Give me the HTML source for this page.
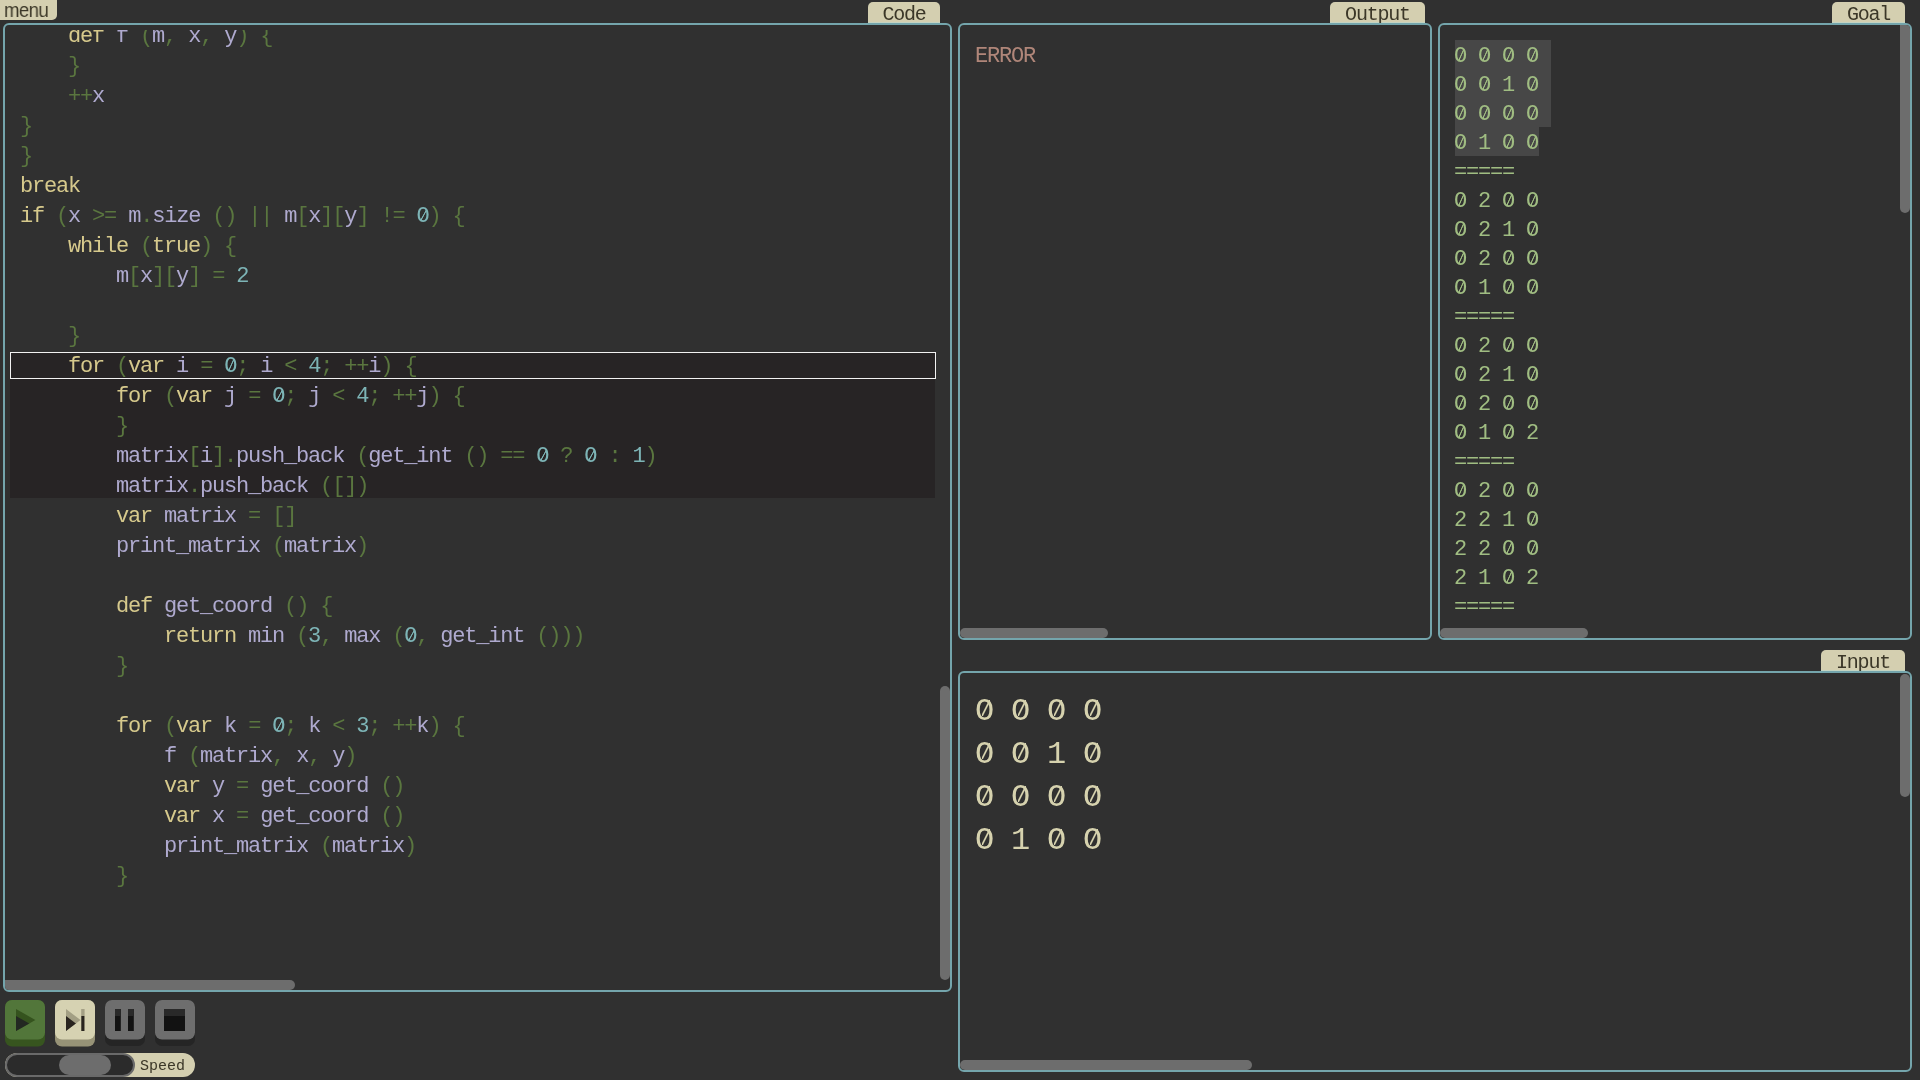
<!DOCTYPE html>
<html><head><meta charset="utf-8">
<style>
html,body{margin:0;padding:0;width:1920px;height:1080px;overflow:hidden;background:#303030;}
pre,.tab,.mono{will-change:transform;}
*{box-sizing:border-box;}
.abs{position:absolute;}
.mono{font-family:"Liberation Mono",monospace;}
.panel{position:absolute;border:2px solid #74a5ac;border-radius:6px;overflow:hidden;background:#303030;}
.tab{position:absolute;box-shadow:inset 0 -1px 0 #c4d4c2;background:#d4cfb0;color:#3b3728;border-radius:5px 5px 0 0;font-family:"Liberation Mono",monospace;font-size:20px;letter-spacing:-1.2px;line-height:25px;text-align:center;}
pre{margin:0;font-family:"Liberation Mono",monospace;}
#code{position:absolute;left:14.5px;top:-8px;font-size:22px;letter-spacing:-1.2px;line-height:30px;white-space:pre;}
b{font-weight:normal;}
.k{color:#d6c98c;}
.v{color:#afaacf;}
.p{color:#5a763f;}
.n{color:#7db4b6;}
i.z{font-style:normal;position:relative;}
i.z::after{content:"";position:absolute;left:0.22em;top:0.21em;width:0.25em;height:0.52em;background:linear-gradient(to bottom right,transparent calc(50% - 0.042em),currentColor calc(50% - 0.012em),currentColor calc(50% + 0.012em),transparent calc(50% + 0.042em));}
.sb{position:absolute;background:#6d6d6d;border-radius:5px;}
#goal{position:absolute;left:14px;top:17px;font-size:22px;letter-spacing:-1.2px;line-height:29px;white-space:pre;color:#a0bd82;}
.hl{}
#input{position:absolute;left:15px;top:17px;font-size:32px;letter-spacing:-1.2px;line-height:43px;white-space:pre;color:#d6d2ae;}
.btn{position:absolute;top:1000px;width:40px;height:46px;border-radius:7px;}
.face{position:absolute;left:0;top:0;width:40px;height:40px;border-radius:7px;}
</style></head><body>

<!-- menu tab -->
<div class="abs" style="left:0;top:0;width:57px;height:20px;background:#d4cfb0;border-radius:0 0 5px 0;"></div>
<div class="abs" style="left:4px;top:-1px;font-family:'Liberation Sans',sans-serif;font-size:20px;line-height:22px;letter-spacing:-0.6px;color:#3b3728;transform:scaleX(0.93);transform-origin:0 0;will-change:transform;">menu</div>

<!-- Code panel -->
<div class="tab" style="left:868px;top:2px;width:72px;height:21px;">Code</div>
<div class="panel" style="left:3px;top:23px;width:949px;height:969px;">
  <div class="abs" style="left:5px;top:327px;width:926px;height:27px;border:1px solid #f2f2f2;background:#272425;"></div>
  <div class="abs" style="left:5px;top:354px;width:925px;height:119px;background:#272425;"></div>
  <div class="abs" style="left:0;top:5px;width:945px;height:960px;overflow:hidden;"><pre id="code">    <b class="k">def</b> <b class="v">f</b> <b class="p">(</b><b class="v">m</b><b class="p">,</b> <b class="v">x</b><b class="p">,</b> <b class="v">y</b><b class="p">)</b> <b class="p">{</b>
    <b class="p">}</b>
    <b class="p">+</b><b class="p">+</b><b class="v">x</b>
<b class="p">}</b>
<b class="p">}</b>
<b class="k">break</b>
<b class="k">if</b> <b class="p">(</b><b class="v">x</b> <b class="p">&gt;</b><b class="p">=</b> <b class="v">m</b><b class="p">.</b><b class="v">size</b> <b class="p">(</b><b class="p">)</b> <b class="p">|</b><b class="p">|</b> <b class="v">m</b><b class="p">[</b><b class="v">x</b><b class="p">]</b><b class="p">[</b><b class="v">y</b><b class="p">]</b> <b class="p">!</b><b class="p">=</b> <b class="n"><i class="z">O</i></b><b class="p">)</b> <b class="p">{</b>
    <b class="k">while</b> <b class="p">(</b><b class="k">true</b><b class="p">)</b> <b class="p">{</b>
        <b class="v">m</b><b class="p">[</b><b class="v">x</b><b class="p">]</b><b class="p">[</b><b class="v">y</b><b class="p">]</b> <b class="p">=</b> <b class="n">2</b>

    <b class="p">}</b>
    <b class="k">for</b> <b class="p">(</b><b class="k">var</b> <b class="v">i</b> <b class="p">=</b> <b class="n"><i class="z">O</i></b><b class="p">;</b> <b class="v">i</b> <b class="p">&lt;</b> <b class="n">4</b><b class="p">;</b> <b class="p">+</b><b class="p">+</b><b class="v">i</b><b class="p">)</b> <b class="p">{</b>
        <b class="k">for</b> <b class="p">(</b><b class="k">var</b> <b class="v">j</b> <b class="p">=</b> <b class="n"><i class="z">O</i></b><b class="p">;</b> <b class="v">j</b> <b class="p">&lt;</b> <b class="n">4</b><b class="p">;</b> <b class="p">+</b><b class="p">+</b><b class="v">j</b><b class="p">)</b> <b class="p">{</b>
        <b class="p">}</b>
        <b class="v">matrix</b><b class="p">[</b><b class="v">i</b><b class="p">]</b><b class="p">.</b><b class="v">push_back</b> <b class="p">(</b><b class="v">get_int</b> <b class="p">(</b><b class="p">)</b> <b class="p">=</b><b class="p">=</b> <b class="n"><i class="z">O</i></b> <b class="p">?</b> <b class="n"><i class="z">O</i></b> <b class="p">:</b> <b class="n">1</b><b class="p">)</b>
        <b class="v">matrix</b><b class="p">.</b><b class="v">push_back</b> <b class="p">(</b><b class="p">[</b><b class="p">]</b><b class="p">)</b>
        <b class="k">var</b> <b class="v">matrix</b> <b class="p">=</b> <b class="p">[</b><b class="p">]</b>
        <b class="v">print_matrix</b> <b class="p">(</b><b class="v">matrix</b><b class="p">)</b>

        <b class="k">def</b> <b class="v">get_coord</b> <b class="p">(</b><b class="p">)</b> <b class="p">{</b>
            <b class="k">return</b> <b class="v">min</b> <b class="p">(</b><b class="n">3</b><b class="p">,</b> <b class="v">max</b> <b class="p">(</b><b class="n"><i class="z">O</i></b><b class="p">,</b> <b class="v">get_int</b> <b class="p">(</b><b class="p">)</b><b class="p">)</b><b class="p">)</b>
        <b class="p">}</b>

        <b class="k">for</b> <b class="p">(</b><b class="k">var</b> <b class="v">k</b> <b class="p">=</b> <b class="n"><i class="z">O</i></b><b class="p">;</b> <b class="v">k</b> <b class="p">&lt;</b> <b class="n">3</b><b class="p">;</b> <b class="p">+</b><b class="p">+</b><b class="v">k</b><b class="p">)</b> <b class="p">{</b>
            <b class="v">f</b> <b class="p">(</b><b class="v">matrix</b><b class="p">,</b> <b class="v">x</b><b class="p">,</b> <b class="v">y</b><b class="p">)</b>
            <b class="k">var</b> <b class="v">y</b> <b class="p">=</b> <b class="v">get_coord</b> <b class="p">(</b><b class="p">)</b>
            <b class="k">var</b> <b class="v">x</b> <b class="p">=</b> <b class="v">get_coord</b> <b class="p">(</b><b class="p">)</b>
            <b class="v">print_matrix</b> <b class="p">(</b><b class="v">matrix</b><b class="p">)</b>
        <b class="p">}</b></pre></div>
  <div class="sb" style="left:935px;top:661px;width:10px;height:294px;"></div>
  <div class="sb" style="left:-5px;top:955px;width:295px;height:10px;"></div>
</div>

<!-- Output panel -->
<div class="tab" style="left:1330px;top:2px;width:95px;height:21px;">Output</div>
<div class="panel" style="left:958px;top:23px;width:474px;height:617px;">
  <div class="abs mono" style="left:15px;top:17px;font-size:22px;letter-spacing:-1.2px;line-height:29px;color:#b08679;">ERROR</div>
  <div class="sb" style="left:0px;top:603px;width:148px;height:10px;"></div>
</div>

<!-- Goal panel -->
<div class="tab" style="left:1832px;top:2px;width:73px;height:21px;">Goal</div>
<div class="panel" style="left:1438px;top:23px;width:474px;height:617px;">
  <div class="abs" style="left:15px;top:15px;width:96px;height:87px;background:#474747;"></div><div class="abs" style="left:15px;top:102px;width:84px;height:29px;background:#474747;"></div>
  <pre id="goal"><span class="hl"><i class="z">O</i> <i class="z">O</i> <i class="z">O</i> <i class="z">O</i> 
<i class="z">O</i> <i class="z">O</i> 1 <i class="z">O</i> 
<i class="z">O</i> <i class="z">O</i> <i class="z">O</i> <i class="z">O</i> 
<i class="z">O</i> 1 <i class="z">O</i> <i class="z">O</i></span>
=====
<i class="z">O</i> 2 <i class="z">O</i> <i class="z">O</i>
<i class="z">O</i> 2 1 <i class="z">O</i>
<i class="z">O</i> 2 <i class="z">O</i> <i class="z">O</i>
<i class="z">O</i> 1 <i class="z">O</i> <i class="z">O</i>
=====
<i class="z">O</i> 2 <i class="z">O</i> <i class="z">O</i>
<i class="z">O</i> 2 1 <i class="z">O</i>
<i class="z">O</i> 2 <i class="z">O</i> <i class="z">O</i>
<i class="z">O</i> 1 <i class="z">O</i> 2
=====
<i class="z">O</i> 2 <i class="z">O</i> <i class="z">O</i>
2 2 1 <i class="z">O</i>
2 2 <i class="z">O</i> <i class="z">O</i>
2 1 <i class="z">O</i> 2
=====</pre>
  <div class="sb" style="left:460px;top:-4px;width:10px;height:192px;"></div>
  <div class="sb" style="left:0px;top:603px;width:148px;height:10px;"></div>
</div>

<!-- Input panel -->
<div class="tab" style="left:1821px;top:650px;width:84px;height:21px;">Input</div>
<div class="panel" style="left:958px;top:671px;width:954px;height:401px;">
  <pre id="input"><i class="z">O</i> <i class="z">O</i> <i class="z">O</i> <i class="z">O</i>
<i class="z">O</i> <i class="z">O</i> 1 <i class="z">O</i>
<i class="z">O</i> <i class="z">O</i> <i class="z">O</i> <i class="z">O</i>
<i class="z">O</i> 1 <i class="z">O</i> <i class="z">O</i></pre>
  <div class="sb" style="left:940px;top:1px;width:10px;height:123px;"></div>
  <div class="sb" style="left:0px;top:387px;width:292px;height:10px;"></div>
</div>

<!-- Controls -->
<svg class="abs" style="left:5px;top:1000px" width="40" height="47" viewBox="0 0 40 47">
  <defs><clipPath id="cp1"><path d="M11 9 L30.4 20 L11 31 Z"/></clipPath></defs>
  <rect x="0" y="0" width="40" height="46.5" rx="7" fill="#37551f"/>
  <rect x="0" y="0" width="40" height="39.5" rx="7" fill="#52763a"/>
  <path d="M11 9 L30.4 20 L11 31 Z" fill="#35531e"/>
  <path d="M11 16 L30.4 27 L11 38 Z" fill="#232822" clip-path="url(#cp1)"/>
</svg>
<svg class="abs" style="left:55px;top:1000px" width="40" height="47" viewBox="0 0 40 47">
  <defs><clipPath id="cp2"><path d="M11 9 L25.5 20 L11 31 Z M26.2 9 H29.6 V31 H26.2 Z"/></clipPath></defs>
  <rect x="0" y="0" width="40" height="46.5" rx="7" fill="#979377"/>
  <rect x="0" y="0" width="40" height="39.5" rx="7" fill="#d6d2b2"/>
  <path d="M11 9 L25.5 20 L11 31 Z M26.2 9 H29.6 V31 H26.2 Z" fill="#a39f84"/>
  <path d="M11 16 L25.5 27 L11 38 Z M26.2 16 H29.6 V38 H26.2 Z" fill="#29241f" clip-path="url(#cp2)"/>
</svg>
<svg class="abs" style="left:105px;top:1000px" width="40" height="47" viewBox="0 0 40 47">
  <rect x="0" y="0" width="40" height="46" rx="7" fill="#252525"/>
  <rect x="0" y="0" width="40" height="39.5" rx="7" fill="#6e6e6e"/>
  <rect x="10" y="9" width="5.8" height="22" fill="#121212"/>
  <rect x="23" y="9" width="5.8" height="22" fill="#121212"/>
  <rect x="10" y="9" width="5.8" height="7" fill="#292929"/>
  <rect x="23" y="9" width="5.8" height="7" fill="#292929"/>
</svg>
<svg class="abs" style="left:155px;top:1000px" width="40" height="47" viewBox="0 0 40 47">
  <rect x="0" y="0" width="40" height="46" rx="7" fill="#252525"/>
  <rect x="0" y="0" width="40" height="39.5" rx="7" fill="#6e6e6e"/>
  <rect x="9" y="9" width="21" height="22" fill="#121212"/>
  <rect x="9" y="9" width="21" height="7" fill="#292929"/>
</svg>

<!-- Speed slider -->
<div class="abs" style="left:5px;top:1053px;width:190px;height:24px;border-radius:12px;background:#d4cfb0;"></div>
<div class="abs" style="left:5px;top:1053px;width:130px;height:24px;border-radius:12px;background:#2b2b2b;border:2px solid #6a6a6a;"></div>
<div class="abs" style="left:59px;top:1055px;width:52px;height:20px;border-radius:10px;background:#6d6d6d;"></div>
<div class="abs mono" style="will-change:transform;left:140px;top:1057px;font-size:15px;line-height:20px;color:#3b3728;">Speed</div>

</body></html>
